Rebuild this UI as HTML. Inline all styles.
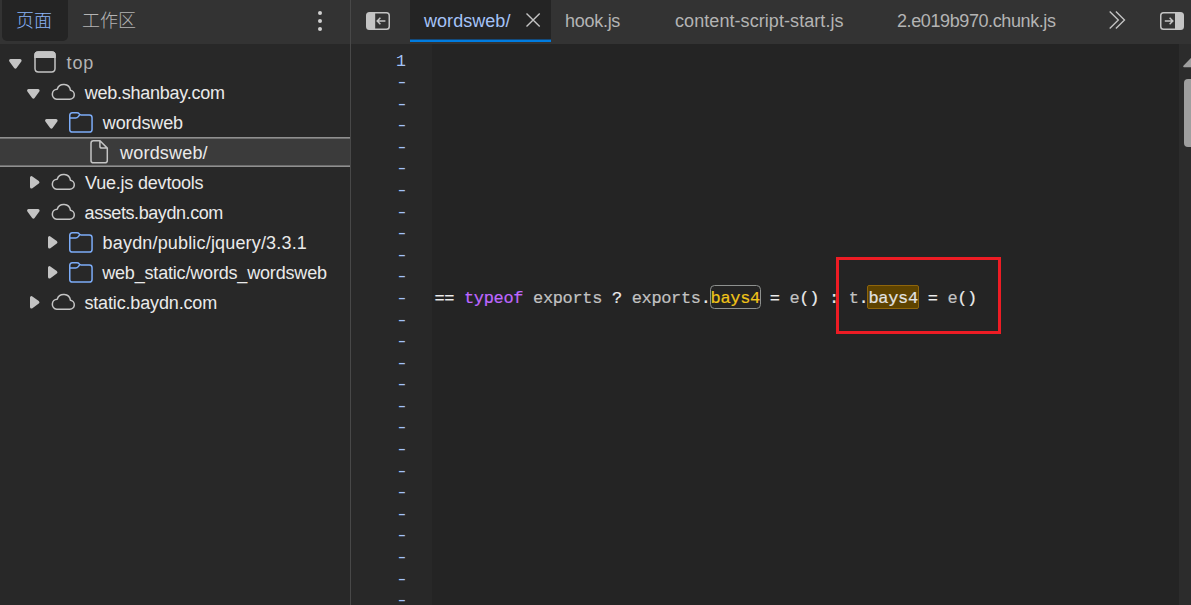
<!DOCTYPE html>
<html lang="zh-CN">
<head>
<meta charset="utf-8">
<title>DevTools Sources</title>
<style>
html,body{margin:0;padding:0;}
body{width:1191px;height:605px;overflow:hidden;background:#282828;position:relative;
  font-family:"Liberation Sans","Noto Sans CJK SC",sans-serif;font-size:18px;color:#e3e3e3;}
.abs{position:absolute;}
#left{left:0;top:0;width:350px;height:605px;background:#282828;}
#divider{left:350px;top:0;width:1px;height:605px;background:#484848;}
#ltool{left:0;top:0;width:350px;height:44px;background:#333333;}
#rtool{left:351px;top:0;width:840px;height:44px;background:#333333;}
#ltab{left:2px;top:0;width:66px;height:41px;background:#242424;border-radius:0 0 5px 5px;}
.tabtxt{top:-0.5px;height:42px;line-height:42px;white-space:nowrap;font-size:18px;}
.cjk{font-family:"Liberation Sans","Noto Sans CJK SC",sans-serif;font-size:18px;font-weight:300;top:-0.3px !important;}
.row{left:0;width:350px;height:30px;}
.row .t{position:absolute;top:0;height:30px;line-height:33px;white-space:nowrap;font-size:18px;color:#e3e3e3;}
.sel{background:linear-gradient(to bottom,#909090 0,#909090 1px,#6e6e6e 1px,#6e6e6e 2px,#3b3b3b 2px,#3b3b3b 28px,#6e6e6e 28px,#6e6e6e 29px,#909090 29px,#909090 30px);}
svg{position:absolute;overflow:visible;}
#gutter{left:351px;top:44px;width:81px;height:561px;background:#282828;}
#editor{left:432px;top:44px;width:759px;height:561px;background:#242424;}
.mono{font-family:"Liberation Mono","DejaVu Sans Mono",monospace;font-size:17px;letter-spacing:-0.342px;white-space:pre;}
.ln{left:351px;width:55px;text-align:right;color:#a3c2f7;height:21.55px;line-height:21.55px;letter-spacing:0;font-size:16.5px;}
.dash{font-size:16.5px;width:55px;left:352.5px;transform:scaleX(1.3);transform-origin:54px 50%;}
#code{left:434.4px;top:287.6px;height:22px;line-height:22px;color:#c2c2c2;-webkit-text-stroke:0.18px currentColor;}
.p{color:#ececec;}
.kw{color:#bf67ff;}
.h1{color:#f0c419;}
.h2{color:#e3e3e3;}
#h1box{left:709.8px;top:284.9px;width:51.4px;height:24.3px;box-sizing:border-box;border:1.3px solid #8e918f;border-radius:4.5px;}
#h2box{left:867px;top:285.1px;width:52px;height:23.8px;box-sizing:border-box;border:1.2px solid #8f650a;border-radius:2px;background:#5e4300;}
#redbox{left:836px;top:257px;width:159px;height:71px;border:3px solid #ed1c24;}
#sbtrack{left:1179px;top:44px;width:12px;height:561px;background:#2c2c2c;}
#sbthumb{left:1184px;top:79px;width:14px;height:68px;background:#9f9f9f;border-radius:4px;}
</style>
</head>
<body>
<div id="left" class="abs"></div>
<div id="ltool" class="abs"></div>
<div id="ltab" class="abs"></div>
<div class="abs tabtxt cjk" style="left:16px;color:#8ab4f8;">页面</div>
<div class="abs tabtxt cjk" style="left:82px;color:#b4b4b4;">工作区</div>
<svg class="abs" style="left:310px;top:6px" width="20" height="30" viewBox="0 0 20 30"><g fill="#d0d0d0"><circle cx="10" cy="7.1" r="2"/><circle cx="10" cy="15" r="2"/><circle cx="10" cy="22.9" r="2"/></g></svg>

<div class="row abs" style="top:47px"><svg class="abs" style="left:8.7px;top:11.6px" width="13" height="10" viewBox="0 0 13 10"><path d="M1.6 1.5 H11.1 L6.35 8.1 Z" fill="#c4c4c4" stroke="#c4c4c4" stroke-width="3" stroke-linejoin="round"/></svg><svg class="abs" style="left:34px;top:4px" width="22" height="22" viewBox="0 0 22 22"><path d="M1 4.4 Q1 1 4.4 1 H17.6 Q21 1 21 4.4 V17.6 Q21 21 17.6 21 H4.4 Q1 21 1 17.6 Z" fill="none" stroke="#c4c4c4" stroke-width="1.5"/><path d="M1 6.2 V4.4 Q1 1 4.4 1 H17.6 Q21 1 21 4.4 V6.2 Z" fill="#c4c4c4" stroke="#c4c4c4" stroke-width="1.5"/></svg><span class="t" style="left:66.5px;color:#b4b4b4;letter-spacing:0.9px">top</span></div>
<div class="row abs" style="top:77px"><svg class="abs" style="left:26.7px;top:11.6px" width="13" height="10" viewBox="0 0 13 10"><path d="M1.6 1.5 H11.1 L6.35 8.1 Z" fill="#c4c4c4" stroke="#c4c4c4" stroke-width="3" stroke-linejoin="round"/></svg><svg class="abs" style="left:51px;top:5.8px" width="24" height="17" viewBox="0 0 24 17"><path d="M5.7 16.2 H18.8 A4.45 4.45 0 0 0 19.5 7.35 A6.9 6.9 0 0 0 6.2 6.15 A5.05 5.05 0 0 0 5.7 16.2 Z" fill="none" stroke="#c4c4c4" stroke-width="1.5" stroke-linejoin="round"/></svg><span class="t" style="left:84.7px;color:#eaeaea;letter-spacing:-0.25px">web.shanbay.com</span></div>
<div class="row abs" style="top:107px"><svg class="abs" style="left:44.7px;top:11.6px" width="13" height="10" viewBox="0 0 13 10"><path d="M1.6 1.5 H11.1 L6.35 8.1 Z" fill="#c4c4c4" stroke="#c4c4c4" stroke-width="3" stroke-linejoin="round"/></svg><svg class="abs" style="left:69.3px;top:4.5px" width="24" height="21" viewBox="0 0 24 21"><path d="M3.4 0.75 H8 Q9.4 0.75 10.2 1.9 Q10.9 3 12.2 3 H20.4 Q23.05 3 23.05 5.7 V17.4 Q23.05 20.05 20.4 20.05 H3.4 Q0.75 20.05 0.75 17.4 V3.4 Q0.75 0.75 3.4 0.75 Z M0.75 5.9 H6.6 Q8.3 5.9 9.3 4.6 L10.5 3" fill="none" stroke="#7cacf8" stroke-width="1.5" stroke-linejoin="round"/></svg><span class="t" style="left:102.8px;color:#eaeaea;letter-spacing:-0.1px">wordsweb</span></div>
<div class="row abs sel" style="top:137px"><svg class="abs" style="left:90px;top:3px" width="19" height="24" viewBox="0 0 19 24"><path d="M3.4 0.8 H10 L17.3 8.1 V20.4 Q17.3 22.8 14.9 22.8 H3.4 Q1 22.8 1 20.4 V3.2 Q1 0.8 3.4 0.8 Z M9.9 1 V6.2 Q9.9 8.1 11.8 8.1 H17.1" fill="none" stroke="#c4c4c4" stroke-width="1.5" stroke-linejoin="round"/></svg><span class="t" style="left:120.1px;color:#eaeaea;letter-spacing:0.18px">wordsweb/</span></div>
<div class="row abs" style="top:167px"><svg class="abs" style="left:29.9px;top:8.7px" width="10" height="13" viewBox="0 0 10 13"><path d="M1.5 1.6 V11 L7.9 6.3 Z" fill="#c4c4c4" stroke="#c4c4c4" stroke-width="3" stroke-linejoin="round"/></svg><svg class="abs" style="left:51px;top:5.8px" width="24" height="17" viewBox="0 0 24 17"><path d="M5.7 16.2 H18.8 A4.45 4.45 0 0 0 19.5 7.35 A6.9 6.9 0 0 0 6.2 6.15 A5.05 5.05 0 0 0 5.7 16.2 Z" fill="none" stroke="#c4c4c4" stroke-width="1.5" stroke-linejoin="round"/></svg><span class="t" style="left:85px;color:#eaeaea;letter-spacing:-0.2px">Vue.js devtools</span></div>
<div class="row abs" style="top:197px"><svg class="abs" style="left:26.7px;top:11.6px" width="13" height="10" viewBox="0 0 13 10"><path d="M1.6 1.5 H11.1 L6.35 8.1 Z" fill="#c4c4c4" stroke="#c4c4c4" stroke-width="3" stroke-linejoin="round"/></svg><svg class="abs" style="left:51px;top:5.8px" width="24" height="17" viewBox="0 0 24 17"><path d="M5.7 16.2 H18.8 A4.45 4.45 0 0 0 19.5 7.35 A6.9 6.9 0 0 0 6.2 6.15 A5.05 5.05 0 0 0 5.7 16.2 Z" fill="none" stroke="#c4c4c4" stroke-width="1.5" stroke-linejoin="round"/></svg><span class="t" style="left:84.6px;color:#eaeaea;letter-spacing:-0.42px">assets.baydn.com</span></div>
<div class="row abs" style="top:227px"><svg class="abs" style="left:47.9px;top:8.7px" width="10" height="13" viewBox="0 0 10 13"><path d="M1.5 1.6 V11 L7.9 6.3 Z" fill="#c4c4c4" stroke="#c4c4c4" stroke-width="3" stroke-linejoin="round"/></svg><svg class="abs" style="left:69.3px;top:4.5px" width="24" height="21" viewBox="0 0 24 21"><path d="M3.4 0.75 H8 Q9.4 0.75 10.2 1.9 Q10.9 3 12.2 3 H20.4 Q23.05 3 23.05 5.7 V17.4 Q23.05 20.05 20.4 20.05 H3.4 Q0.75 20.05 0.75 17.4 V3.4 Q0.75 0.75 3.4 0.75 Z M0.75 5.9 H6.6 Q8.3 5.9 9.3 4.6 L10.5 3" fill="none" stroke="#7cacf8" stroke-width="1.5" stroke-linejoin="round"/></svg><span class="t" style="left:102.6px;color:#eaeaea;letter-spacing:0.17px">baydn/public/jquery/3.3.1</span></div>
<div class="row abs" style="top:257px"><svg class="abs" style="left:47.9px;top:8.7px" width="10" height="13" viewBox="0 0 10 13"><path d="M1.5 1.6 V11 L7.9 6.3 Z" fill="#c4c4c4" stroke="#c4c4c4" stroke-width="3" stroke-linejoin="round"/></svg><svg class="abs" style="left:69.3px;top:4.5px" width="24" height="21" viewBox="0 0 24 21"><path d="M3.4 0.75 H8 Q9.4 0.75 10.2 1.9 Q10.9 3 12.2 3 H20.4 Q23.05 3 23.05 5.7 V17.4 Q23.05 20.05 20.4 20.05 H3.4 Q0.75 20.05 0.75 17.4 V3.4 Q0.75 0.75 3.4 0.75 Z M0.75 5.9 H6.6 Q8.3 5.9 9.3 4.6 L10.5 3" fill="none" stroke="#7cacf8" stroke-width="1.5" stroke-linejoin="round"/></svg><span class="t" style="left:102.2px;color:#eaeaea;letter-spacing:-0.18px">web_static/words_wordsweb</span></div>
<div class="row abs" style="top:287px"><svg class="abs" style="left:29.9px;top:8.7px" width="10" height="13" viewBox="0 0 10 13"><path d="M1.5 1.6 V11 L7.9 6.3 Z" fill="#c4c4c4" stroke="#c4c4c4" stroke-width="3" stroke-linejoin="round"/></svg><svg class="abs" style="left:51px;top:5.8px" width="24" height="17" viewBox="0 0 24 17"><path d="M5.7 16.2 H18.8 A4.45 4.45 0 0 0 19.5 7.35 A6.9 6.9 0 0 0 6.2 6.15 A5.05 5.05 0 0 0 5.7 16.2 Z" fill="none" stroke="#c4c4c4" stroke-width="1.5" stroke-linejoin="round"/></svg><span class="t" style="left:84.4px;color:#eaeaea;letter-spacing:-0.15px">static.baydn.com</span></div>

<div id="divider" class="abs"></div>
<div id="rtool" class="abs"></div>
<div id="gutter" class="abs"></div>
<div id="editor" class="abs"></div>

<svg class="abs" style="left:366px;top:12px" width="24" height="18" viewBox="0 0 24 18"><rect x="0.75" y="0.75" width="22.5" height="16.5" rx="2.8" fill="none" stroke="#c4c4c4" stroke-width="1.5"/><path d="M0.75 3.6 Q0.75 0.75 3.6 0.75 H9.2 V17.25 H3.6 Q0.75 17.25 0.75 14.4 Z" fill="#c4c4c4"/><path d="M19.4 9 H11.6 M14.4 5.8 L11.2 9 L14.4 12.2" fill="none" stroke="#c4c4c4" stroke-width="1.5"/></svg>
<div class="abs" style="left:410px;top:0;width:141px;height:40px;background:#242424"></div>
<div class="abs" style="left:410px;top:39px;width:141px;height:3px;background:linear-gradient(to bottom,#134a7c 0,#134a7c 1px,#007ce0 1px,#007ce0 3px)"></div>
<div class="abs tabtxt" style="left:424px;color:#a4c3f8;letter-spacing:0.05px">wordsweb/</div>
<svg class="abs" style="left:526px;top:13px" width="14" height="14" viewBox="0 0 14 14"><path d="M0.5 0.5 L13.7 13.5 M13.7 0.5 L0.5 13.5" stroke="#c4c4c4" stroke-width="1.4" fill="none"/></svg>
<div class="abs tabtxt" style="left:565px;color:#b4b4b4;letter-spacing:-0.28px">hook.js</div>
<div class="abs tabtxt" style="left:675px;color:#b4b4b4;letter-spacing:0.07px">content-script-start.js</div>
<div class="abs tabtxt" style="left:897px;color:#b4b4b4;letter-spacing:-0.4px">2.e019b970.chunk.js</div>
<svg class="abs" style="left:1109px;top:11px" width="17" height="18" viewBox="0 0 17 18"><path d="M0.7 0.6 L9.3 9 L0.7 17.4 M6.9 0.6 L15.5 9 L6.9 17.4" stroke="#c4c4c4" stroke-width="1.35" fill="none"/></svg>
<svg class="abs" style="left:1160px;top:12px" width="24" height="18" viewBox="0 0 24 18"><rect x="0.75" y="0.75" width="22.5" height="16.5" rx="2.8" fill="none" stroke="#c4c4c4" stroke-width="1.5"/><path d="M23.25 3.6 Q23.25 0.75 20.4 0.75 H15 V17.25 H20.4 Q23.25 17.25 23.25 14.4 Z" fill="#c4c4c4"/><path d="M4.8 9 H12.4 M9.6 5.8 L12.8 9 L9.6 12.2" fill="none" stroke="#c4c4c4" stroke-width="1.5"/></svg>

<div class="abs mono ln" style="top:51.00px">1</div>
<div class="abs mono ln dash" style="top:72px">-</div>
<div class="abs mono ln dash" style="top:94px">-</div>
<div class="abs mono ln dash" style="top:115px">-</div>
<div class="abs mono ln dash" style="top:137px">-</div>
<div class="abs mono ln dash" style="top:158px">-</div>
<div class="abs mono ln dash" style="top:180px">-</div>
<div class="abs mono ln dash" style="top:202px">-</div>
<div class="abs mono ln dash" style="top:223px">-</div>
<div class="abs mono ln dash" style="top:245px">-</div>
<div class="abs mono ln dash" style="top:266px">-</div>
<div class="abs mono ln dash" style="top:288px">-</div>
<div class="abs mono ln dash" style="top:310px">-</div>
<div class="abs mono ln dash" style="top:331px">-</div>
<div class="abs mono ln dash" style="top:353px">-</div>
<div class="abs mono ln dash" style="top:374px">-</div>
<div class="abs mono ln dash" style="top:396px">-</div>
<div class="abs mono ln dash" style="top:417px">-</div>
<div class="abs mono ln dash" style="top:439px">-</div>
<div class="abs mono ln dash" style="top:461px">-</div>
<div class="abs mono ln dash" style="top:482px">-</div>
<div class="abs mono ln dash" style="top:504px">-</div>
<div class="abs mono ln dash" style="top:525px">-</div>
<div class="abs mono ln dash" style="top:547px">-</div>
<div class="abs mono ln dash" style="top:569px">-</div>
<div class="abs mono ln dash" style="top:590px">-</div>
<div id="sbtrack" class="abs"></div>
<div id="sbthumb" class="abs"></div>
<svg class="abs" style="left:1183px;top:57.7px" width="8" height="10" viewBox="0 0 8 10"><path d="M1 8.4 L8.5 0.6 L16 8.4 Z" fill="#9f9f9f" stroke="#9f9f9f" stroke-linejoin="round" stroke-width="1.6"/></svg>

<div id="h1box" class="abs"></div>
<div id="h2box" class="abs"></div>
<div id="code" class="abs mono"><span class="p">==</span> <span class="kw">typeof</span> exports <span class="p">?</span> exports<span class="p">.</span><span class="h1">bays4</span> <span class="p">=</span> e<span class="p">()</span> <span class="p">:</span> t<span class="p">.</span><span class="h2">bays4</span> <span class="p">=</span> e<span class="p">()</span></div>
<div id="redbox" class="abs"></div>
</body>
</html>
